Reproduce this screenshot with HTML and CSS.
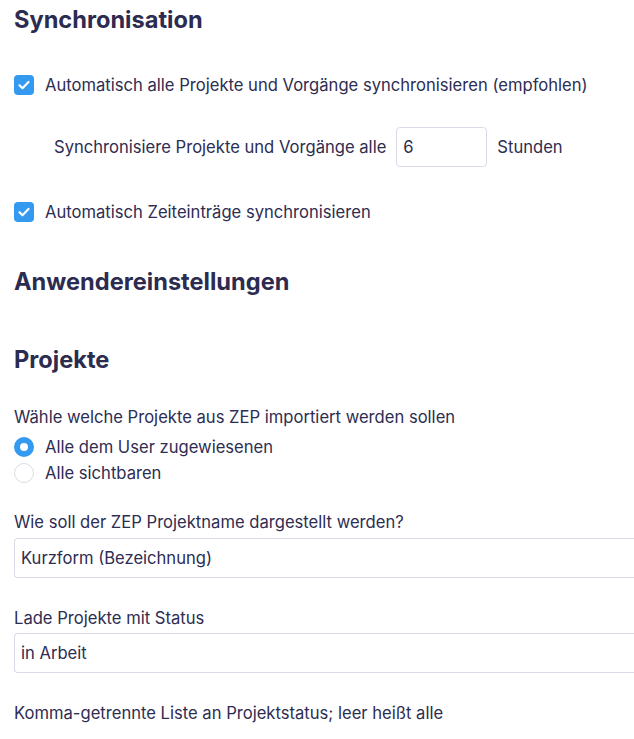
FILE: index.html
```html
<!DOCTYPE html>
<html lang="de">
<head>
  <meta charset="UTF-8">
  <meta name="viewport" content="width=device-width, initial-scale=1.0">
  <title>Einstellungen</title>
  <link rel="stylesheet" href="styles.css">
</head>
<body>
  <div class="settings">
    <h2 class="section-title first">Synchronisation</h2>

    <label class="check-row row-sync">
      <span class="checkbox checked"><svg viewBox="0 0 20 20" width="20" height="20"><path d="M5.5 10.3l3 3 6-6.3" fill="none" stroke="#fff" stroke-width="2.2" stroke-linecap="round" stroke-linejoin="round"/></svg></span>
      <span>Automatisch alle Projekte und Vorgänge synchronisieren (empfohlen)</span>
    </label>

    <div class="interval-row">
      <span>Synchronisiere Projekte und Vorgänge alle</span>
      <input type="text" class="text-input small" value="6">
      <span>Stunden</span>
    </div>

    <label class="check-row row-time">
      <span class="checkbox checked"><svg viewBox="0 0 20 20" width="20" height="20"><path d="M5.5 10.3l3 3 6-6.3" fill="none" stroke="#fff" stroke-width="2.2" stroke-linecap="round" stroke-linejoin="round"/></svg></span>
      <span>Automatisch Zeiteinträge synchronisieren</span>
    </label>

    <h2 class="section-title user-settings">Anwendereinstellungen</h2>

    <h2 class="section-title projects">Projekte</h2>

    <p class="field-label first-label">Wähle welche Projekte aus ZEP importiert werden sollen</p>
    <div class="radio-group">
      <label class="radio-row"><span class="radio checked"></span><span>Alle dem User zugewiesenen</span></label>
      <label class="radio-row"><span class="radio"></span><span>Alle sichtbaren</span></label>
    </div>

    <p class="field-label">Wie soll der ZEP Projektname dargestellt werden?</p>
    <input type="text" class="text-input wide" value="Kurzform (Bezeichnung)">

    <p class="field-label status-label">Lade Projekte mit Status</p>
    <input type="text" class="text-input wide status-input" value="in Arbeit">

    <p class="field-label">Komma-getrennte Liste an Projektstatus; leer heißt alle</p>
  </div>
</body>
</html>
```

FILE: styles.css
```css
html, body {
  margin: 0;
  padding: 0;
}

body {
  font-family: 'Inter', 'Liberation Sans', sans-serif;
  color: #2e2d52;
  background: #fff;
  font-size: 16.6px;
}

.settings {
  padding-left: 14px;
}

.section-title {
  font-size: 23.6px;
  line-height: 28px;
  font-weight: 700;
  margin: 0;
  color: #2c2b50;
}

.section-title.first {
  margin-top: 6px;
}

.section-title.user-settings {
  margin-top: 44px;
}

.section-title.projects {
  margin-top: 50px;
}

.check-row {
  display: flex;
  align-items: center;
  gap: 11px;
  height: 24px;
}

.row-sync {
  margin-top: 39px;
}

.row-time {
  margin-top: 33px;
}

.checkbox {
  width: 20px;
  height: 20px;
  border-radius: 4px;
  background-color: #339af0;
  display: flex;
}

.interval-row {
  display: flex;
  align-items: center;
  gap: 10px;
  margin-top: 30px;
  padding-left: 40px;
}

.text-input {
  font-family: inherit;
  font-size: 16.6px;
  color: #2e2d52;
  height: 40px;
  border: 1px solid #dcdae6;
  border-radius: 4px;
  padding: 0 6px;
  box-sizing: border-box;
  outline: none;
  background: #fff;
}

.text-input.small {
  width: 91px;
}

.text-input.wide {
  display: block;
  width: 100%;
  margin-top: 4px;
  border-right: none;
  border-radius: 4px 0 0 4px;
}

.text-input.status-input {
  margin-top: 3px;
}

.field-label {
  margin: 28px 0 0;
  line-height: 24px;
}

.field-label.first-label {
  margin-top: 31px;
}

.field-label.status-label {
  margin-top: 28px;
}

.radio-group {
  margin-top: 5px;
}

.radio-row {
  display: flex;
  align-items: center;
  gap: 11px;
  height: 26px;
}

.radio {
  width: 20px;
  height: 20px;
  border-radius: 50%;
  border: 1px solid #dcdae6;
  box-sizing: border-box;
}

.radio.checked {
  border: 6px solid #339af0;
}

.radio-group + .field-label {
  margin-top: 24px;
}
```
